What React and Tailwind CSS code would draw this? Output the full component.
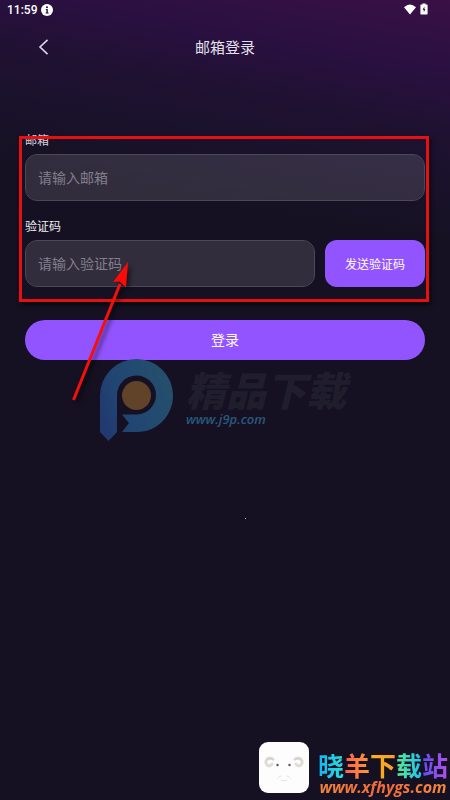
import { useState } from 'react';

const siteName = [
    { char: '晓', color: 'from-[#14b4f5] to-[#2be0dc]' },
    { char: '羊', color: 'from-[#ff5a4e] to-[#ff9a2e]' },
    { char: '下', color: 'from-[#ffb01f] to-[#f5a020]' },
    { char: '载', color: 'from-[#5ae88c] to-[#1cc0ee]' },
    { char: '站', color: 'from-[#5a4df0] to-[#b44df0]' },
];

const inputClass =
    'h-[47px] w-full min-w-0 rounded-xl border border-[#4c4858] bg-white/12 bg-clip-padding px-3 pb-[2px] text-sm text-white outline-none placeholder:text-[#827e8c] placeholder:opacity-100';

function StatusBar() {
    return (
        <div className="flex h-5 items-center justify-between pl-[7px] pr-[22px] text-white">
            <div className="flex items-center gap-1">
                <span className="font-['Roboto',sans-serif] text-xs font-medium">11:59</span>
                <svg className="size-3" viewBox="0 0 12 12" aria-hidden="true">
                    <circle cx="6" cy="6" r="6" fill="#fff" />
                    <circle cx="6" cy="3.2" r="1" fill="#24103a" />
                    <path d="M4.8 5h2v3.600h.8v.8H4.600v-.8h.8V5.800h-.6z" fill="#24103a" />
                </svg>
            </div>
            <div className="flex items-center gap-1 pb-[2px]">
                <svg className="h-3 w-3" viewBox="0 0 12 12" aria-hidden="true">
                    <path d="M0 4.200Q6-1.400 12 4.200L6 11.400z" fill="#fff" />
                </svg>
                <svg className="h-3 w-2" viewBox="0 0 8 12" aria-hidden="true">
                    <path d="M2.4.5h3.2v1H7q.6 0 .6.7v8.6q0 .7-.6.7H1q-.6 0-.6-.7V2.200q0-.7.6-.7h1.400z" fill="#fff" />
                    <path d="M4.400 3.400 2.600 6.700h1.200v2.600L5.400 6H4.400z" fill="#24103a" />
                </svg>
            </div>
        </div>
    );
}

function Header() {
    return (
        <header className="grid h-[54px] grid-cols-[1fr_auto_1fr] items-center px-[37px]">
            <button type="button" aria-label="返回" className="flex h-8 w-8 items-center text-[#ddd6e4]">
                <svg className="h-4 w-3" viewBox="0 0 12 16" fill="none" stroke="currentColor" strokeWidth="1.6" aria-hidden="true">
                    <path d="M10.500.8 3 8l7.500 7.200" />
                </svg>
            </button>
            <h1 className="text-[15px] text-[#e6e0ec]">邮箱登录</h1>
        </header>
    );
}

function Highlight() {
    return (
        <div className="pointer-events-none absolute -bottom-[15px] -left-[6px] -right-[4px] top-[4px] border-[3px] border-[#e60f12] shadow-[2px_3px_4px_rgba(0,0,0,0.6)]">
            <svg className="absolute left-[46px] top-[120px] h-[150px] w-[70px] drop-shadow-[3px_3px_2px_rgba(0,0,0,0.5)]" viewBox="0 0 70 150" aria-hidden="true">
                <path d="M5.500 141 52 25" stroke="#f5100c" strokeWidth="3" />
                <path d="M60 3 45 23l6.500-.5 6.500 6z" fill="#fb0a08" />
            </svg>
        </div>
    );
}

function Watermark() {
    return (
        <div className="pointer-events-none absolute left-[100px] top-[359px] flex gap-3" aria-hidden="true">
            <svg className="h-[82px] w-[74px]" viewBox="0 0 74 82">
                <defs>
                    <linearGradient id="ring" x1="0" y1="1" x2="1" y2="0.6">
                        <stop offset="0" stopColor="#21356f" />
                        <stop offset="0.4" stopColor="#214573" />
                        <stop offset="1" stopColor="#244e6c" />
                    </linearGradient>
                </defs>
                <path
                    d="M0 36.500A36.500 36.500 0 0 1 73 36.500C73 57 57 73 37 73H22l7-9-7-8.500h15a19.500 19.500 0 1 0-20-19.500v37L8.500 82 0 73z"
                    fill="url(#ring)"
                />
                <circle cx="36.500" cy="36.500" r="14.500" fill="#614329" />
            </svg>
            <div className="flex flex-col">
                <span className="mt-2 text-[40px] font-black italic leading-[44px] text-[#201e2c]">精品下载</span>
                <span className="-mt-[2px] font-['Open_Sans',sans-serif] text-[13px] font-semibold italic leading-5 text-[#28587c]">www.j9p.com</span>
            </div>
        </div>
    );
}

function SiteBadge() {
    return (
        <div className="pointer-events-none absolute bottom-0 right-[2px] flex items-start gap-[9px]">
            <svg className="h-[58px] w-[50px]" viewBox="0 0 50 58" aria-hidden="true">
                <rect width="50" height="51" rx="9" fill="#fdfdfd" />
                <g fill="none" strokeLinecap="round">
                    <path d="M14 17C9 14 5 19 8 23q3 2 5-1" stroke="#dfddd6" strokeWidth="3" />
                    <path d="M36 17c5-3 9 2 6 6q-3 2-5-1" stroke="#dfddd6" strokeWidth="3" />
                    <path d="M8 18q3-3 6 0M42 18q-3-3-6 0" stroke="#c2bfb8" strokeWidth=".8" />
                    <path d="M19 36q1-2 3-2M31 36q-1-2-3-2M22 38q3 2 6 0" stroke="#dddad6" strokeWidth=".8" />
                </g>
                <circle cx="18.500" cy="23" r="1.200" fill="#555" />
                <circle cx="30.500" cy="23" r="1.200" fill="#555" />
            </svg>
            <div className="mt-[7px] flex flex-col items-center">
                <div className="flex text-[26px] font-bold leading-8">
                    {siteName.map(item => (
                        <span key={item.char} className={`bg-linear-to-r bg-clip-text text-transparent ${item.color}`}>
                            {item.char}
                        </span>
                    ))}
                </div>
                <span className="-mt-1 bg-linear-to-r from-[#f5843c] via-[#f06a3a] to-[#f58a3c] bg-clip-text font-['Open_Sans',sans-serif] text-base font-bold italic leading-5 text-transparent">
                    www.xfhygs.com
                </span>
            </div>
        </div>
    );
}

export default function App() {
    const [email, setEmail] = useState('');
    const [code, setCode] = useState('');

    return (
        <div className="relative min-h-screen overflow-hidden bg-[#151122] bg-[linear-gradient(190deg,#3a1046_0%,#2a1041_8%,#1f1131_15%,#1a122c_20%,#151122_28%)] font-['Noto_Sans_CJK_SC',sans-serif]">
            <StatusBar />
            <Header />
            <form className="px-[25px] pt-[58px]" onSubmit={e => e.preventDefault()}>
                <div className="relative">
                    <label htmlFor="email" className="mb-[6px] block text-xs leading-4 text-[#d4cfda]">邮箱</label>
                    <input
                        id="email"
                        type="email"
                        className={inputClass}
                        placeholder="请输入邮箱"
                        value={email}
                        onChange={e => setEmail(e.target.value)}
                    />
                    <label htmlFor="code" className="mb-[6px] mt-[17px] block text-xs leading-4 text-[#f0edf4]">验证码</label>
                    <div className="flex gap-[10px]">
                        <input
                            id="code"
                            type="text"
                            className={inputClass}
                            placeholder="请输入验证码"
                            value={code}
                            onChange={e => setCode(e.target.value)}
                        />
                        <button type="button" className="h-[47px] w-[100px] shrink-0 rounded-xl bg-[#9254ff] text-xs text-white">
                            发送验证码
                        </button>
                    </div>
                    <Highlight />
                </div>
                <button type="submit" className="mt-[33px] h-10 w-full rounded-full bg-[#9254ff] pb-[2px] text-sm text-white">
                    登录
                </button>
            </form>
            <Watermark />
            <span className="absolute left-[245px] top-[518px] size-px bg-[#b8b5c0]" />
            <SiteBadge />
        </div>
    );
}
